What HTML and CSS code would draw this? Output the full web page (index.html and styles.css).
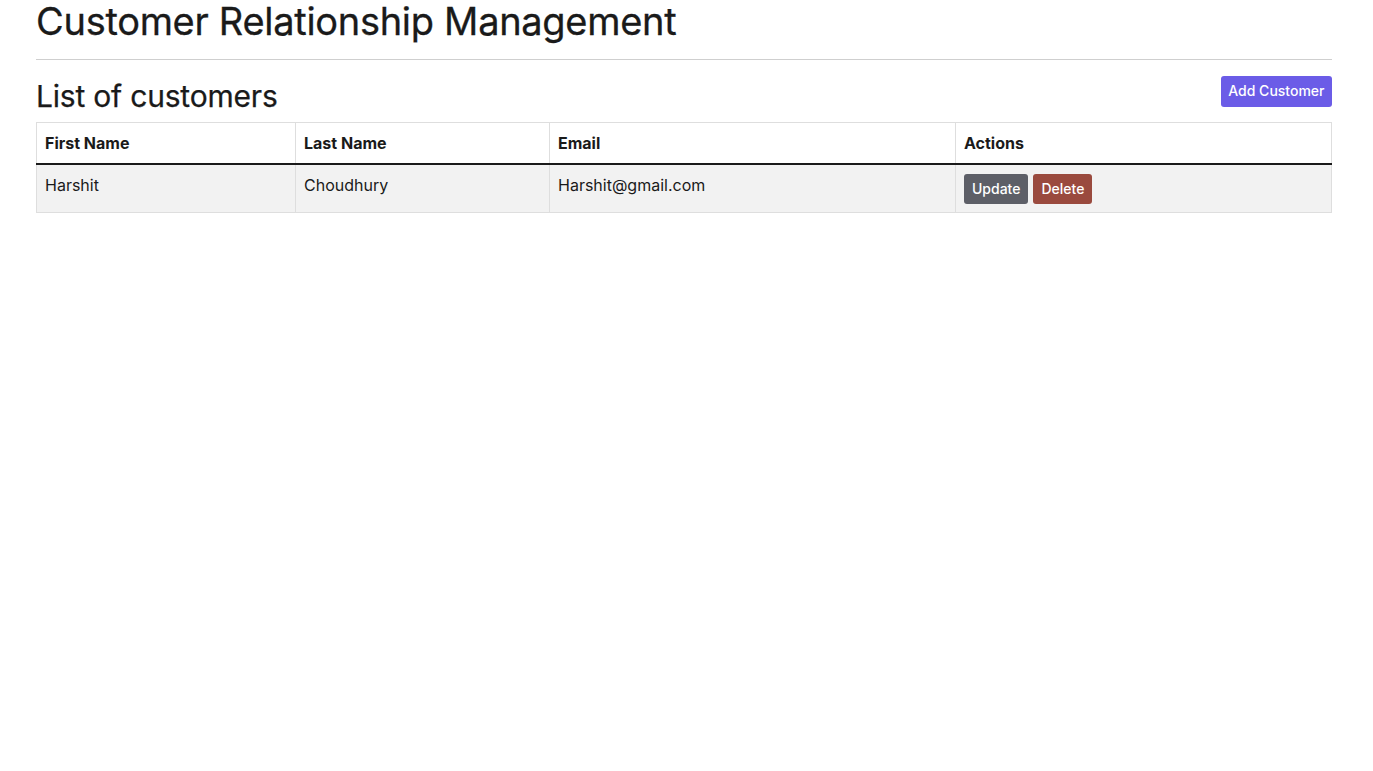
FILE: index.html
```html
<!DOCTYPE html>
<html>
<head>
<meta charset="utf-8">
<link rel="stylesheet" href="styles.css">
</head>
<body>
<div class="container">
  <h1 class="title">Customer Relationship Management</h1>
  <hr class="rule">
  <div class="list-head">
    <h2 class="subtitle">List of customers</h2>
    <a class="btn btn-add">Add Customer</a>
  </div>
  <table class="table">
    <colgroup>
      <col class="c1"><col class="c2"><col class="c3"><col class="c4">
    </colgroup>
    <thead>
      <tr><th>First Name</th><th>Last Name</th><th>Email</th><th>Actions</th></tr>
    </thead>
    <tbody>
      <tr>
        <td>Harshit</td>
        <td>Choudhury</td>
        <td>Harshit@gmail.com</td>
        <td class="actions"><a class="btn btn-update">Update</a><a class="btn btn-delete">Delete</a></td>
      </tr>
    </tbody>
  </table>
</div>
</body>
</html>
```
FILE: styles.css
```css
html, body { margin: 0; padding: 0; background: #fff; }
body { font-family: Inter, "Noto Sans", sans-serif; color: #1a1a1a; font-size: 16px; }
.container { padding: 0 41px 0 36px; }
.title { font-size: 38px; font-weight: 400; margin: 0; line-height: 42px; letter-spacing: -0.3px; -webkit-text-stroke: 0.3px #1a1a1a; }
.rule { border: 0; border-top: 1px solid #cfcfcf; margin: 17px 0 0; }
.list-head { display: flex; justify-content: space-between; align-items: flex-start; margin-top: 16px; }
.subtitle { font-size: 30px; font-weight: 400; margin: 0; line-height: 40px; letter-spacing: -0.2px; -webkit-text-stroke: 0.25px #1a1a1a; }
.btn { display: inline-block; font-size: 14px; font-weight: 500; line-height: 20px; padding: 5px 9px 6px; border-radius: 3px; color: #fff; }
.btn-add { background: #6b5ce7; padding: 5px 7.5px 6px; }
.table { width: 100%; border-collapse: collapse; margin-top: 6px; }
.c1 { width: 259px; } .c2 { width: 254px; } .c3 { width: 406px; } .c4 { width: auto; }
.table th, .table td { border: 1px solid #dedede; text-align: left; padding: 0 8px; font-size: 16px; }
.table th { font-weight: 700; height: 40px; border-bottom: 2px solid #1a1a1a; }
.table td { height: 48px; background: #f2f2f2; vertical-align: top; padding-top: 10px; box-sizing: border-box; }
.table td.actions { padding-top: 9px; }
.btn-update { background: #5d5f67; padding: 5px 8px; margin-right: 5px; }
.btn-delete { background: #9a4a3e; padding: 5px 8px; }
```
